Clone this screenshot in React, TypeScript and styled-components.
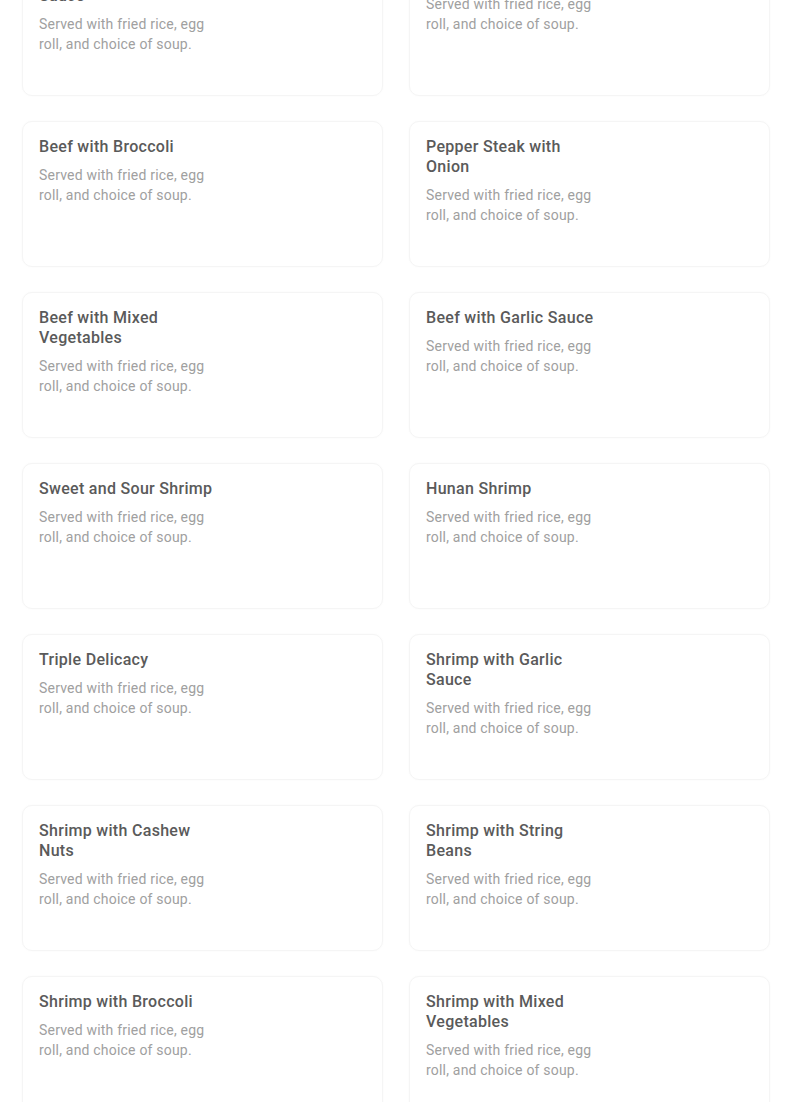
import styled, { createGlobalStyle } from "styled-components";

type Dish = {
  name: string;
  description: string;
};

const SERVED = "Served with fried rice, egg roll, and choice of soup.";

const dishes: Dish[] = [
  { name: "Chicken with Garlic Sauce", description: SERVED },
  { name: "Hunan Chicken", description: SERVED },
  { name: "Beef with Broccoli", description: SERVED },
  { name: "Pepper Steak with Onion", description: SERVED },
  { name: "Beef with Mixed Vegetables", description: SERVED },
  { name: "Beef with Garlic Sauce", description: SERVED },
  { name: "Sweet and Sour Shrimp", description: SERVED },
  { name: "Hunan Shrimp", description: SERVED },
  { name: "Triple Delicacy", description: SERVED },
  { name: "Shrimp with Garlic Sauce", description: SERVED },
  { name: "Shrimp with Cashew Nuts", description: SERVED },
  { name: "Shrimp with String Beans", description: SERVED },
  { name: "Shrimp with Broccoli", description: SERVED },
  { name: "Shrimp with Mixed Vegetables", description: SERVED },
];

const GlobalStyle = createGlobalStyle`
  html, body {
    margin: 0;
    padding: 0;
    background: #ffffff;
    font-family: Roboto, "Liberation Sans", Arial, sans-serif;
    overflow: hidden;
  }
`;

const Page = styled.main`
  width: 804px;
  height: 1102px;
  overflow: hidden;
`;

// the list is scrolled: the first row sits partly above the fold
const MenuGrid = styled.section`
  display: grid;
  grid-template-columns: 361px 361px;
  column-gap: 26px;
  row-gap: 25px;
  padding-left: 22px;
  margin-top: -50px;
`;

const DishCard = styled.article`
  box-sizing: border-box;
  height: 146px;
  padding: 15px 16px;
  background: #ffffff;
  border: 1px solid #f5f5f5;
  border-radius: 10px;
  box-shadow: 0 0 3px rgba(0, 0, 0, 0.025);
  cursor: pointer;
`;

const DishText = styled.div`
  max-width: 180px;
  display: flex;
  flex-direction: column;
  gap: 9px;
`;

const DishName = styled.h3`
  margin: 0;
  font-size: 16px;
  line-height: 20px;
  font-weight: 500;
  letter-spacing: 0.3px;
  color: #5a5a5a;
`;

const DishDescription = styled.p`
  margin: 0;
  margin-top: -1px;
  font-size: 14px;
  line-height: 20px;
  font-weight: 400;
  letter-spacing: 0.2px;
  color: #a0a0a0;
`;

function App() {
  return (
    <Page>
      <GlobalStyle />
      <MenuGrid>
        {dishes.map(dish => (
          <DishCard key={dish.name}>
            <DishText>
              <DishName>{dish.name}</DishName>
              <DishDescription>{dish.description}</DishDescription>
            </DishText>
          </DishCard>
        ))}
      </MenuGrid>
    </Page>
  );
}

export default App;
